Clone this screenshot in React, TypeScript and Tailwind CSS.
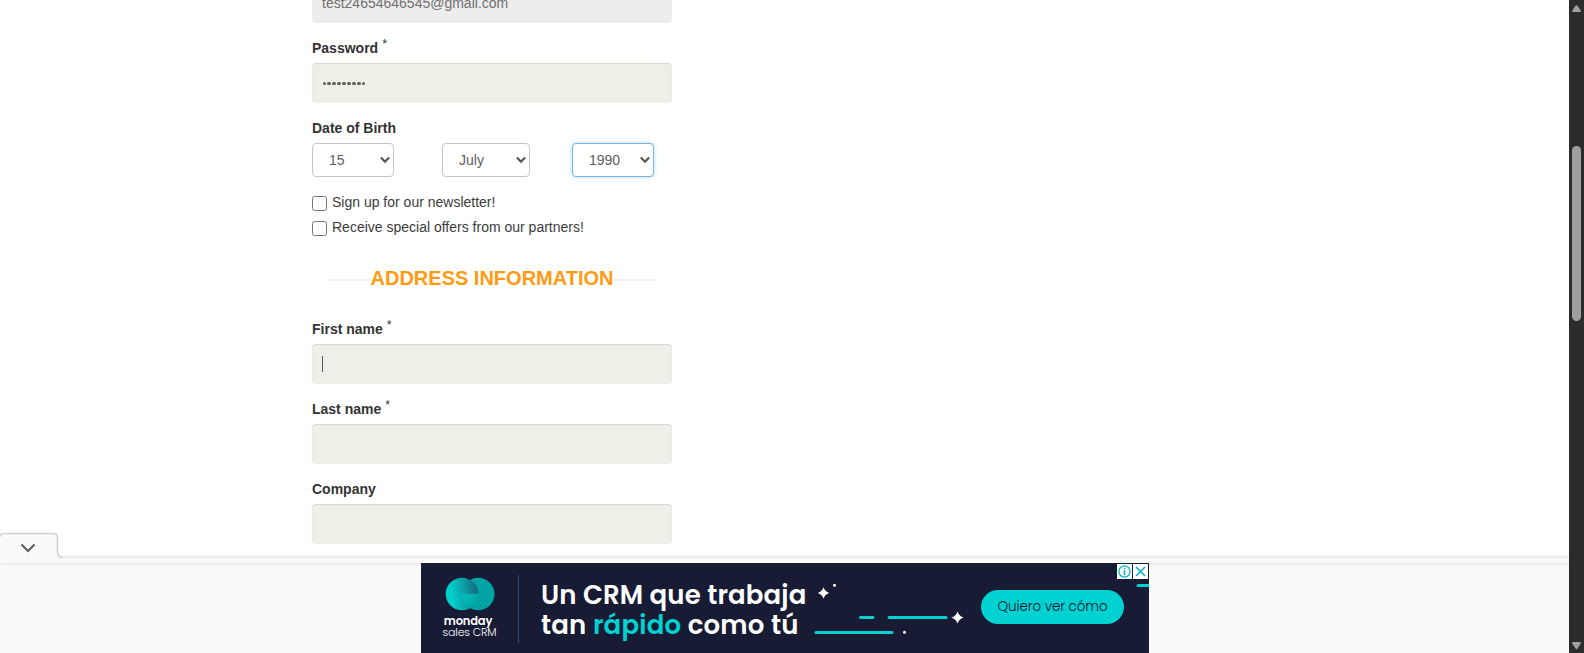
import type { ReactNode } from "react";

const inputBox =
  "flex h-10 w-full items-center rounded-[4px] bg-[#efefe7] px-[10px] shadow-[inset_0_1px_1px_rgba(0,0,0,0.1)]";

function Field({ label, required, children }: { label: string; required?: boolean; children?: ReactNode }) {
  return (
    <div className="mb-[15px]">
      <div className="mb-[5px] flex h-5 text-[14px] leading-5 font-bold text-[#333]">
        {label}
        {required && <span className="-mt-[4px] ml-1 text-[12.5px] leading-5 font-normal">*</span>}
      </div>
      <div className={inputBox}>{children}</div>
    </div>
  );
}

function SelectBox({ value, className }: { value: string; className: string }) {
  return (
    <div className={`flex h-[34px] items-center justify-between rounded-[4px] border bg-white pr-[3px] pl-4 text-[14px] text-[#606060] ${className}`}>
      <span>{value}</span>
      <svg width="10" height="8" viewBox="0 0 10 8" fill="none" stroke="#555" strokeWidth="2.2">
        <path d="M0.9 1.6 5 5.8 9.1 1.6" />
      </svg>
    </div>
  );
}

function CheckRow({ text }: { text: string }) {
  return (
    <div className="flex h-[25px] items-start text-[14px] leading-5 text-[#3c3c3c]">
      <span className="mt-1 mr-[5px] h-[15px] w-[15px] shrink-0 rounded-[2.5px] border border-[#767676] bg-white" />
      {text}
    </div>
  );
}

function Banner() {
  return (
    <div className="relative flex h-[90px] w-[728px] overflow-hidden bg-[#181b34] font-[Poppins,Inter,sans-serif]">
      <svg className="absolute inset-0" width="728" height="90" viewBox="0 0 728 90">
        <g stroke="#00d2d2" strokeWidth="3" strokeLinecap="round">
          <path d="M395 69.5H471M439.5 54.5H452M468 54.5H525M717 22.5H730" />
        </g>
        <path fill="#fff" d="M402.5 24.3Q403.9 28.6 408.2 30Q403.9 31.4 402.5 35.7Q401.1 31.4 396.8 30Q401.1 28.6 402.5 24.3ZM536.5 48.4Q538 53 542.6 54.5Q538 56 536.5 60.6Q535 56 530.4 54.5Q535 53 536.5 48.4Z" />
        <circle cx="413.5" cy="22.3" r="1.5" fill="#fff" />
        <circle cx="483.5" cy="69.3" r="1.5" fill="#fff" />
      </svg>
      <div className="flex w-[97px] flex-col items-center pl-px">
        <svg className="mt-[13.5px]" width="50" height="34" viewBox="0 0 50 34">
          <defs>
            <linearGradient id="disc" gradientUnits="userSpaceOnUse" x1="6" y1="17" x2="34" y2="12">
              <stop offset="0" stopColor="#00cfcb" />
              <stop offset="0.4" stopColor="#0ba9ad" />
              <stop offset="1" stopColor="#146377" />
            </linearGradient>
            <linearGradient id="wedge" gradientUnits="userSpaceOnUse" x1="17" y1="20" x2="32" y2="28">
              <stop offset="0" stopColor="#00bfbc" />
              <stop offset="1" stopColor="#00a3a3" />
            </linearGradient>
          </defs>
          <circle cx="33.2" cy="17" r="16.3" fill="#00a3a3" />
          <circle cx="17" cy="17" r="16.3" fill="url(#disc)" />
          <path d="M17 17H33.3A16.3 16.3 0 0 1 25.2 31.1A16.3 16.3 0 0 1 17 17Z" fill="url(#wedge)" />
        </svg>
        <span className="mt-[3px] -ml-[3px] text-[11.5px] leading-[14px] font-semibold tracking-[-0.2px] text-white">monday</span>
        <span className="-mt-[3px] text-[11px] leading-[14px] font-light tracking-[-0.15px] whitespace-nowrap text-white">sales CRM</span>
      </div>
      <div className="mt-3 h-[68px] w-px bg-[#1f5278]" />
      <div className="ml-[22.5px] flex w-[290px] flex-col pt-[17px] text-[26px] leading-[30px] font-semibold whitespace-nowrap text-white">
        <span className="tracking-[0.13px]">Un CRM que trabaja</span>
        <span className="tracking-[0.2px]">
          tan <span className="text-[#00d2d2]">rápido</span> como tú
        </span>
      </div>
      <div className="mt-[27px] ml-[149.5px] flex h-[34px] w-[143px] items-center justify-center rounded-full bg-[#00d2d2] pl-px text-[13.5px] font-light tracking-[-0.1px] whitespace-nowrap text-[#10132c]">
        Quiero ver cómo
      </div>
      <div className="absolute top-px right-px flex gap-px">
        <svg className="bg-white" width="15" height="15" viewBox="0 0 15 15" fill="none" stroke="#00aecd">
          <circle cx="7.5" cy="7.5" r="5.6" strokeWidth="1.2" />
          <path d="M7.5 6.2V11M7.5 3.7V5.2" strokeWidth="1.6" />
        </svg>
        <svg className="bg-white" width="15" height="15" viewBox="0 0 15 15" fill="none" stroke="#00aecd" strokeWidth="1.5">
          <path d="M3 3 12 12M12 3 3 12" />
        </svg>
      </div>
    </div>
  );
}

export default function App() {
  return (
    <div className="flex h-[653px] w-[1584px] overflow-hidden bg-white font-['Liberation_Sans',Arial,sans-serif]">
      <div className="flex w-[1569px] flex-col">
        <main className="h-[558px] overflow-hidden pl-[312px]">
          <div className="w-[360px]">
            <div className="-mt-[17px] mb-[15px] flex h-10 items-center rounded-[4px] bg-[#ededed] px-[10px] text-[14px] text-[#707070]">
              test24654646545@gmail.com
            </div>
            <Field label="Password" required>
              <span className="ml-[0.5px] flex gap-[1.1px] pt-px">
                {Array.from({ length: 9 }, (_, i) => (
                  <span key={i} className="h-[3.8px] w-[3.8px] rounded-full bg-[#606060]" />
                ))}
              </span>
            </Field>
            <div className="mb-[5px] h-5 text-[14px] leading-5 font-bold text-[#333]">Date of Birth</div>
            <div className="mb-[15px] flex">
              <SelectBox value="15" className="mr-12 w-[82px] border-[#c4c4c4]" />
              <SelectBox value="July" className="mr-[42px] w-[88px] border-[#c4c4c4]" />
              <SelectBox value="1990" className="w-[82px] border-[#76b4e6] shadow-[0_0_5px_rgba(102,175,233,0.45)]" />
            </div>
            <CheckRow text="Sign up for our newsletter!" />
            <CheckRow text="Receive special offers from our partners!" />
            <div className="mx-[15px] mt-[21px] mb-[26px] flex h-[30px] items-center">
              <span className="mt-[3px] h-[2px] flex-1 bg-[#f3f3f3]" />
              <h2 className="text-[20px] leading-[30px] font-bold text-[#ff9a14]">ADDRESS INFORMATION</h2>
              <span className="mt-[3px] h-[2px] flex-1 bg-[#f3f3f3]" />
            </div>
            <Field label="First name" required>
              <span className="h-4 w-px bg-[#555]" />
            </Field>
            <Field label="Last name" required />
            <Field label="Company" />
          </div>
        </main>
        <footer className="relative flex h-[95px] flex-col items-center bg-[#fafafa] shadow-[0_-1px_4px_rgba(0,0,0,0.13)]">
          <svg className="absolute -top-[26px] left-0" width="70" height="27" viewBox="0 0 70 27">
            <path d="M0 5Q0 1 4 1H53Q57.5 1 57.5 5V20Q57.5 26 63 26H70V27H0Z" fill="#fafafa" />
            <path d="M0 5Q0 1.5 4 1.5H53Q57.5 1.5 57.5 5V20Q57.5 25.5 63 25.5" fill="none" stroke="#d2d2d2" strokeWidth="1.5" />
            <path d="M21.5 12.5 28 19 34.5 12.5" fill="none" stroke="#616161" strokeWidth="2.2" />
          </svg>
          <div className="h-[5px] w-full shadow-[0_1px_3px_rgba(0,0,0,0.1)]" />
          <Banner />
        </footer>
      </div>
      <aside className="flex w-[15px] flex-col items-center bg-[#2c2c2c]">
        <svg className="mt-[5px]" width="9" height="8" viewBox="0 0 9 8">
          <path d="M3.7 0.6Q4.5 -0.3 5.3 0.6L8.8 5.5Q9 7 8 7H1Q0 7 0.2 5.5Z" fill="#9f9f9f" />
        </svg>
        <div className="mt-[133px] h-[175px] w-[9px] rounded-full bg-[#9f9f9f]" />
        <svg className="mt-auto mb-[3px]" width="9" height="8" viewBox="0 0 9 8">
          <path d="M3.7 6.7Q4.5 7.7 5.3 6.7L8.8 1.5Q9 0 8 0H1Q0 0 0.2 1.5Z" fill="#9f9f9f" />
        </svg>
      </aside>
    </div>
  );
}
